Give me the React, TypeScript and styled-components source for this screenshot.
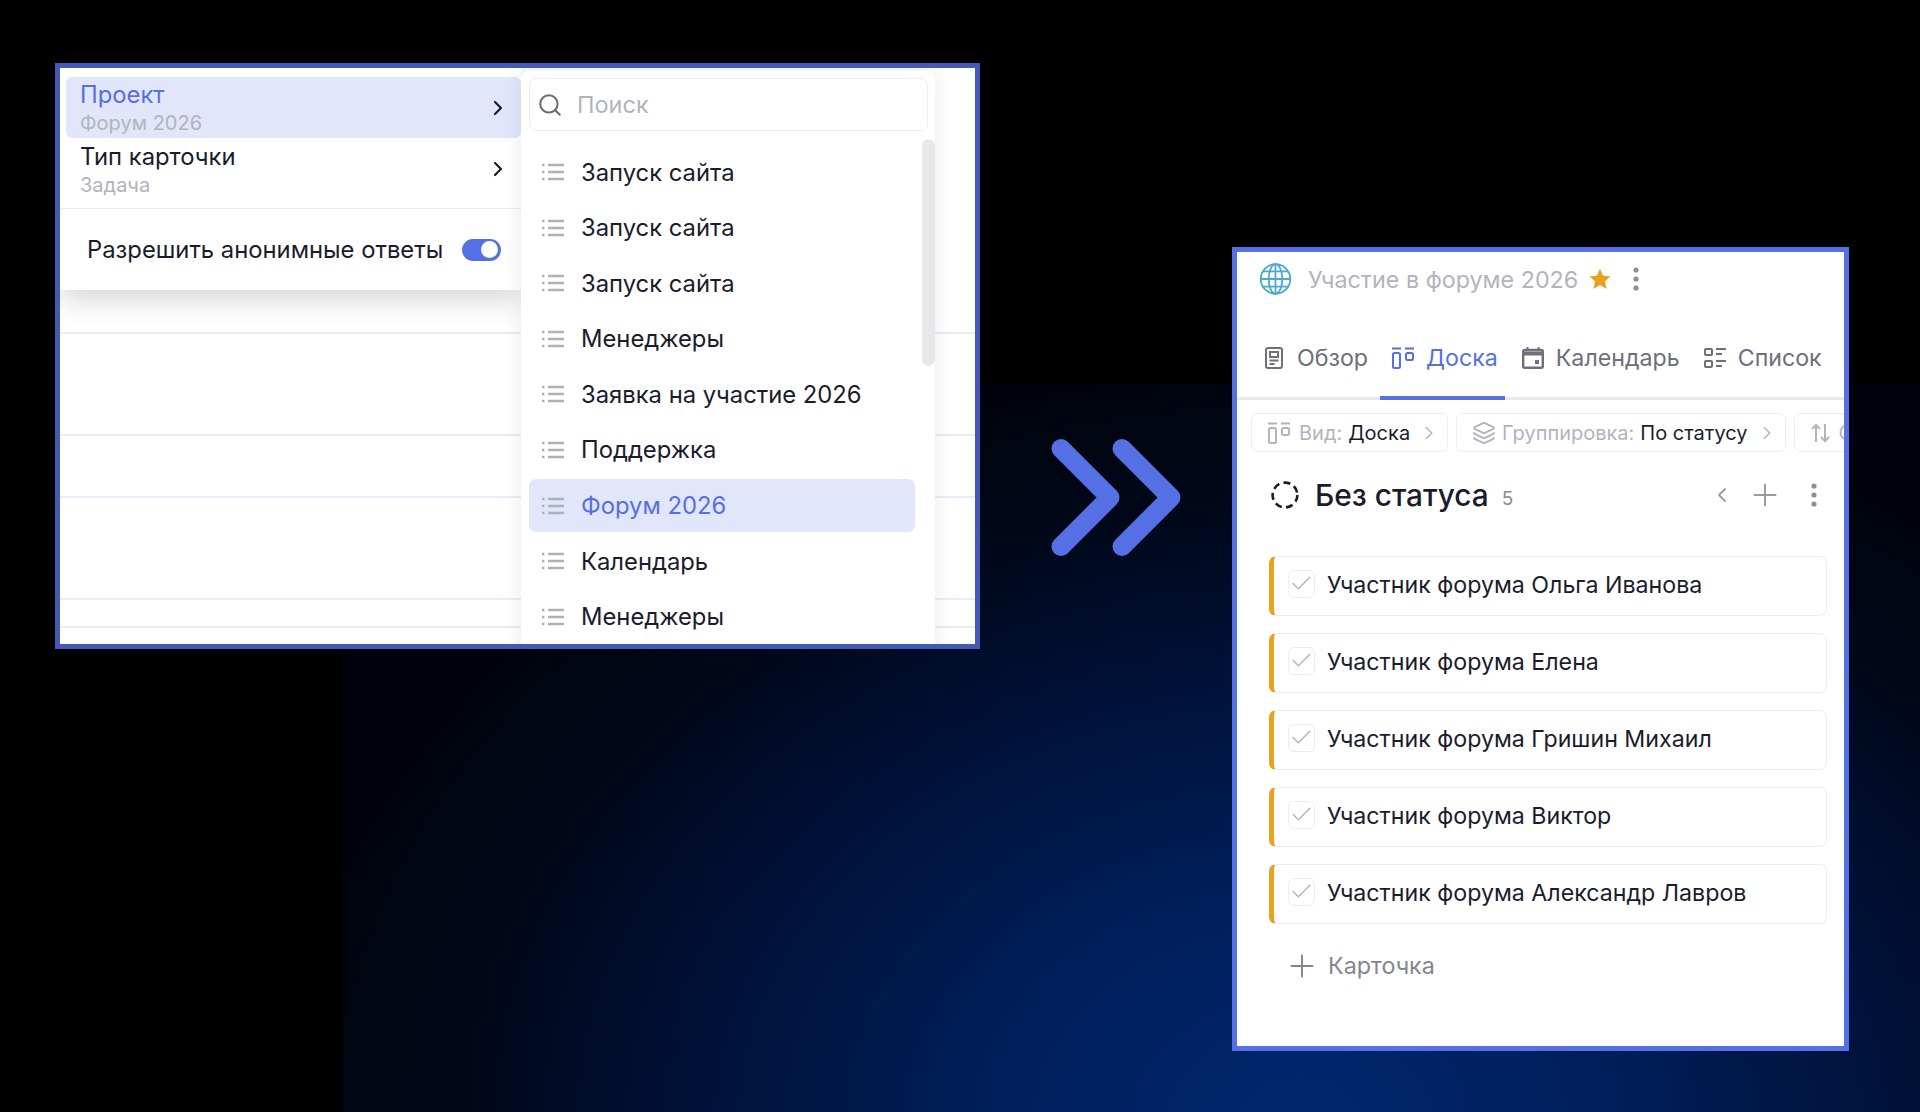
import React from "react";
import styled, { createGlobalStyle } from "styled-components";
import { ChevronLeft, ChevronRight, Search, Layers, Check, Plus } from "lucide-react";

const BLUE = "#5570e4";
const INK = "#1a1c2e";
const FAINT = "#b3b3bf";

const Global = createGlobalStyle`
  html, body { margin: 0; padding: 0; background: #000; }
  * { box-sizing: border-box; }
  body { font-family: Inter, "Noto Sans", sans-serif; }
`;

const Canvas = styled.div`
  position: relative;
  width: 1920px;
  height: 1112px;
  overflow: hidden;
  background: #000;
  display: flex;
  align-items: flex-start;
  padding: 63px 0 0 55px;
  &::before {
    content: "";
    position: absolute;
    left: 342px;
    top: 383px;
    right: 0;
    bottom: 0;
    background: radial-gradient(ellipse 1020px 760px at 958px 740px, #00276f 0%, #001f5c 28%, #00123a 58%, #000718 82%, #00030c 100%);
  }
`;

const LeftWindow = styled.section`
  position: relative;
  flex: none;
  width: 925px;
  height: 586px;
  border: 5px solid #4458b8;
  background: #fff;
  overflow: hidden;
`;

const BackRow = styled.div<{ $h: number }>`
  height: ${(p) => p.$h}px;
  border-bottom: 2px solid #e8ebfb;
`;

const Menu = styled.div`
  position: absolute;
  left: 0;
  top: 0;
  width: 461px;
  height: 222px;
  background: #fff;
  padding: 9px 0 0 6px;
  display: flex;
  flex-direction: column;
  box-shadow: 0 10px 28px rgba(0, 0, 0, 0.16);
`;

const MenuRow = styled.div<{ $active?: boolean }>`
  height: 61px;
  flex: none;
  border-radius: 6px;
  padding: 0 11px 0 14px;
  display: flex;
  align-items: center;
  justify-content: space-between;
  background: ${(p) => (p.$active ? "#e1e6fb" : "transparent")};
  color: ${(p) => (p.$active ? BLUE : INK)};
`;

const MenuText = styled.div<{ $drop: number }>`
  display: flex;
  flex-direction: column;
  padding-top: ${(p) => p.$drop}px;
`;

const MenuTitle = styled.span`
  font-size: 23.8px;
  line-height: 28px;
`;

const MenuValue = styled.span`
  font-size: 20px;
  line-height: 29px;
  color: ${FAINT};
`;

const Divider = styled.div`
  height: 1px;
  margin: 9px 0 0 -6px;
  background: #ebebee;
  flex: none;
`;

const ToggleRow = styled.label`
  flex: 1;
  margin-left: -6px;
  padding: 0 20px 0 27px;
  display: flex;
  align-items: center;
  justify-content: space-between;
  font-size: 23.8px;
  color: ${INK};
`;

const Toggle = styled.span`
  width: 39px;
  height: 22px;
  border-radius: 11px;
  background: ${BLUE};
  display: flex;
  align-items: center;
  justify-content: flex-end;
  padding-right: 3px;
  &::after {
    content: "";
    width: 17px;
    height: 17px;
    border-radius: 50%;
    background: #fff;
  }
`;

const Submenu = styled.div`
  position: absolute;
  left: 461px;
  top: 3px;
  width: 414px;
  height: 590px;
  background: #fff;
  border-radius: 8px;
  box-shadow: 0 0 22px rgba(0, 0, 0, 0.09);
  padding: 7px 0 0 8px;
`;

const SearchBox = styled.div`
  width: 399px;
  height: 53px;
  border: 1px solid #eeeef1;
  border-radius: 7px;
  display: flex;
  align-items: center;
  padding-left: 7px;
  gap: 14px;
  font-size: 23.5px;
  color: ${FAINT};
  svg { color: #6c6c78; }
`;

const Scrollbar = styled.div`
  position: absolute;
  right: 0;
  top: 68px;
  width: 13px;
  height: 227px;
  border-radius: 7px;
  background: #e8e8ea;
`;

const List = styled.div`
  margin-top: 14.5px;
  width: 386px;
  display: flex;
  flex-direction: column;
  gap: 2.6px;
`;

const Item = styled.div<{ $active?: boolean }>`
  flex: none;
  height: 53px;
  padding-left: 13px;
  border-radius: 7px;
  display: flex;
  align-items: center;
  gap: 17px;
  font-size: 23.8px;
  background: ${(p) => (p.$active ? "#e1e6fb" : "transparent")};
  color: ${(p) => (p.$active ? BLUE : INK)};
`;

const Arrow = styled.svg`
  position: relative;
  flex: none;
  width: 137px;
  height: 125px;
  margin: 371.5px 0 0 68px;
  color: ${BLUE};
`;

const RightWindow = styled.section`
  position: relative;
  flex: none;
  width: 617px;
  height: 804px;
  margin: 184px 0 0 47px;
  border: 5px solid ${BLUE};
  background: #fff;
  overflow: hidden;
`;

const Header = styled.header`
  display: flex;
  align-items: center;
  height: 32px;
  margin: 11px 0 0 22px;
  > svg:last-child { margin-left: 21px; }
`;

const Title = styled.h1`
  margin: 0 11px 0 16px;
  font-size: 23.3px;
  font-weight: 400;
  color: ${FAINT};
  white-space: nowrap;
`;

const Kebab = styled.svg`
  flex: none;
  width: 8px;
  height: 24px;
  color: #8f8f9b;
`;

const Tabs = styled.nav`
  display: flex;
  height: 80px;
  margin-top: 25px;
  padding-left: 16px;
  gap: 5px;
  border-bottom: 3px solid #e9e9eb;
`;

const Tab = styled.div<{ $active?: boolean }>`
  height: 80px;
  margin-bottom: -3px;
  padding: 0 7px 0 12px;
  display: flex;
  align-items: center;
  gap: 12px;
  font-size: 23.2px;
  white-space: nowrap;
  color: ${(p) => (p.$active ? BLUE : "#6e6e7c")};
  border-bottom: 4px solid ${(p) => (p.$active ? BLUE : "transparent")};
`;

const OverviewSvg = styled.svg`
  margin-right: 2px;
`;

const Chips = styled.div`
  display: flex;
  gap: 8px;
  margin: 13px 0 0 14px;
`;

const Chip = styled.div`
  flex: none;
  height: 39px;
  padding: 0 15px 0 16px;
  border: 1px solid #eeeef1;
  border-radius: 7px;
  display: flex;
  align-items: center;
  font-size: 20px;
  white-space: nowrap;
  color: ${FAINT};
  svg { flex: none; }
`;

const ChipLabel = styled.span`
  margin-left: 9px;
`;

const ChipValue = styled.span`
  margin: 0 16px 0 6px;
  color: ${INK};
`;

const ChipChevron = styled(ChevronRight)`
  margin: 0 -8px;
`;

const ChipLayers = styled(Layers)`
  margin: 0 -3px 0 -1px;
`;

const Column = styled.div`
  display: flex;
  align-items: center;
  height: 30px;
  margin: 28px 26px 0 34px;
`;

const ColumnTitle = styled.h2`
  margin: 0 0 0 16px;
  font-size: 29.8px;
  font-weight: 500;
  color: ${INK};
  white-space: nowrap;
`;

const Count = styled.span`
  margin: 7px 0 0 13px;
  font-size: 19px;
  color: #8a8a96;
`;

const ColumnTools = styled.div`
  margin-left: auto;
  display: flex;
  align-items: center;
  gap: 12.5px;
  color: #9a9aa6;
  > svg:last-child { margin-left: 15px; }
`;

const Cards = styled.div`
  display: flex;
  flex-direction: column;
  gap: 17.5px;
  width: 558px;
  margin: 46px 0 0 32px;
`;

const Card = styled.div`
  height: 59.5px;
  border: 1px solid #eeeef1;
  border-left: 5px solid #e9a21e;
  border-radius: 7px;
  padding: 0 0 1px 14px;
  display: flex;
  align-items: center;
  gap: 12px;
  font-size: 23.2px;
  color: ${INK};
  white-space: nowrap;
`;

const Checkbox = styled.span`
  flex: none;
  width: 27px;
  height: 28px;
  margin-top: -3px;
  border: 1px solid #ededf0;
  border-radius: 6px;
  display: flex;
  align-items: center;
  justify-content: center;
  color: #b5b5bf;
`;

const AddCard = styled.div`
  display: flex;
  align-items: center;
  gap: 8px;
  height: 40px;
  margin: 22px 0 0 47px;
  font-size: 23.3px;
  color: #85858f;
`;

const ListGlyph = () => (
  <svg width="22" height="18" viewBox="0 0 22 18" fill="none" stroke="#b0b0ba" strokeWidth="2.4" style={{ flex: "none" }}>
    <path d="M0 2h3M0 9h3M0 16h3" strokeDasharray="2.4 .6" />
    <path d="M6 2h16M6 9h16M6 16h16" />
  </svg>
);

const Globe = () => (
  <svg width="33" height="32" viewBox="0 0 33 32" fill="none" stroke="#4ba9cd" strokeWidth="1.8" style={{ flex: "none" }}>
    <circle cx="16.5" cy="16" r="14.8" />
    <ellipse cx="16.5" cy="16" rx="6.8" ry="14.8" />
    <path d="M16.5 1.2v29.6M1.7 16h29.6M4 8.4h25M4 23.6h25" />
  </svg>
);

const Star = () => (
  <svg width="22" height="22" viewBox="0 0 22 22" fill="#e9a21e" style={{ flex: "none" }}>
    <path d="M11 .8l3.1 7 7.4.7-5.6 5 1.7 7.5L11 16.9 4.4 21l1.7-7.5-5.6-5 7.4-.7z" />
  </svg>
);

const Dots = () => (
  <Kebab viewBox="0 0 8 24" fill="currentColor">
    <circle cx="4" cy="3" r="2.6" />
    <circle cx="4" cy="12" r="2.6" />
    <circle cx="4" cy="21" r="2.6" />
  </Kebab>
);

const OverviewIcon = () => (
  <OverviewSvg width="18" height="22" viewBox="0 0 18 22" fill="none" stroke="currentColor" strokeWidth="2">
    <rect x="1" y="1" width="16" height="20" rx="2" />
    <rect x="5" y="5" width="8" height="5" />
    <path d="M4.5 13.5h9M4.5 17h5" />
  </OverviewSvg>
);

const BoardIcon = () => (
  <svg width="22" height="22" viewBox="0 0 22 22" fill="none" stroke="currentColor" strokeWidth="2">
    <path d="M0 1.5h9M13 1.5h9" />
    <rect x="1" y="6" width="7" height="15" rx="1.5" />
    <rect x="14" y="6" width="7" height="7" rx="1.5" />
  </svg>
);

const CalendarIcon = () => (
  <svg width="22" height="22" viewBox="0 0 22 22" fill="none" stroke="currentColor" strokeWidth="2.4">
    <path d="M5.5 0v4M16.5 0v4" strokeWidth="2" />
    <rect x="1.2" y="3" width="19.6" height="17.8" rx="1.5" />
    <path d="M1 6.5h20" strokeWidth="4" />
    <rect x="13" y="13" width="4" height="4" fill="currentColor" stroke="none" />
  </svg>
);

const ChecklistIcon = () => (
  <svg width="22" height="22" viewBox="0 0 22 22" fill="none" stroke="currentColor" strokeWidth="2">
    <rect x="1" y="2" width="7" height="6" rx="1" />
    <rect x="1" y="14" width="7" height="6" rx="1" />
    <path d="M12 2h10M12 7h6M12 14h10M12 19h6" />
  </svg>
);

const SortIcon = () => (
  <svg width="19" height="20" viewBox="0 0 19 20" fill="none" stroke="currentColor" strokeWidth="2">
    <path d="M5 19V2M1 6l4-4 4 4M14 1v17M10 14l4 4 4-4" />
  </svg>
);

const StatusRing = () => (
  <svg width="28" height="28" viewBox="0 0 28 28" fill="none" stroke={INK} strokeWidth="2.6" style={{ flex: "none" }}>
    <circle cx="14" cy="14" r="12.4" strokeDasharray="7 4.3" />
  </svg>
);

const items = ["Запуск сайта", "Запуск сайта", "Запуск сайта", "Менеджеры", "Заявка на участие 2026", "Поддержка", "Форум 2026", "Календарь", "Менеджеры"];
const people = ["Ольга Иванова", "Елена", "Гришин Михаил", "Виктор", "Александр Лавров"];

export default function App() {
  return (
    <Canvas>
      <Global />
      <LeftWindow>
        {[266, 102, 62, 102, 28].map((h, i) => (
          <BackRow key={i} $h={h} />
        ))}
        <Menu>
          <MenuRow $active>
            <MenuText $drop={3}>
              <MenuTitle>Проект</MenuTitle>
              <MenuValue>Форум 2026</MenuValue>
            </MenuText>
            <ChevronRight size={24} color={INK} strokeWidth={2.2} />
          </MenuRow>
          <MenuRow>
            <MenuText $drop={6}>
              <MenuTitle>Тип карточки</MenuTitle>
              <MenuValue>Задача</MenuValue>
            </MenuText>
            <ChevronRight size={24} color={INK} strokeWidth={2.2} />
          </MenuRow>
          <Divider />
          <ToggleRow>
            Разрешить анонимные ответы
            <Toggle />
          </ToggleRow>
        </Menu>
        <Submenu>
          <SearchBox>
            <Search size={26} strokeWidth={1.9} />
            Поиск
          </SearchBox>
          <Scrollbar />
          <List>
            {items.map((t, i) => (
              <Item key={i} $active={t === "Форум 2026"}>
                <ListGlyph />
                {t}
              </Item>
            ))}
          </List>
        </Submenu>
      </LeftWindow>

      <Arrow viewBox="0 0 137 125" fill="none" stroke="currentColor" strokeWidth="19" strokeLinecap="round" strokeLinejoin="round">
        <path d="M13 13.5L62 62.5L13 111.5" />
        <path d="M74 13.5L123 62.5L74 111.5" />
      </Arrow>

      <RightWindow>
        <Header>
          <Globe />
          <Title>Участие в форуме 2026</Title>
          <Star />
          <Dots />
        </Header>
        <Tabs>
          <Tab><OverviewIcon />Обзор</Tab>
          <Tab $active><BoardIcon />Доска</Tab>
          <Tab><CalendarIcon />Календарь</Tab>
          <Tab><ChecklistIcon />Список</Tab>
        </Tabs>
        <Chips>
          <Chip>
            <BoardIcon />
            <ChipLabel>Вид:</ChipLabel>
            <ChipValue>Доска</ChipValue>
            <ChipChevron size={22} strokeWidth={1.6} />
          </Chip>
          <Chip>
            <ChipLayers size={24} strokeWidth={1.8} />
            <ChipLabel>Группировка:</ChipLabel>
            <ChipValue>По статусу</ChipValue>
            <ChipChevron size={22} strokeWidth={1.6} />
          </Chip>
          <Chip>
            <SortIcon />
            <ChipLabel>Сортировка</ChipLabel>
          </Chip>
        </Chips>
        <Column>
          <StatusRing />
          <ColumnTitle>Без статуса</ColumnTitle>
          <Count>5</Count>
          <ColumnTools>
            <ChevronLeft size={24} strokeWidth={1.8} />
            <Plus size={36} strokeWidth={1.3} />
            <Dots />
          </ColumnTools>
        </Column>
        <Cards>
          {people.map((p) => (
            <Card key={p}>
              <Checkbox>
                <Check size={25} strokeWidth={1.4} />
              </Checkbox>
              Участник форума {p}
            </Card>
          ))}
        </Cards>
        <AddCard>
          <Plus size={36} strokeWidth={1.3} />
          Карточка
        </AddCard>
      </RightWindow>
    </Canvas>
  );
}
